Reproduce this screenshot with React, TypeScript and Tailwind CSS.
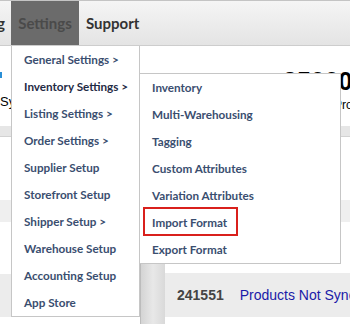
import React from 'react';

const mainItems = [
  { label: 'General Settings >' },
  { label: 'Inventory Settings >', active: true },
  { label: 'Listing Settings >' },
  { label: 'Order Settings >' },
  { label: 'Supplier Setup' },
  { label: 'Storefront Setup' },
  { label: 'Shipper Setup >' },
  { label: 'Warehouse Setup' },
  { label: 'Accounting Setup' },
  { label: 'App Store' },
];

const subItems = [
  'Inventory',
  'Multi-Warehousing',
  'Tagging',
  'Custom Attributes',
  'Variation Attributes',
  'Import Format',
  'Export Format',
];

export default function App() {
  return (
    <div className="relative w-[350px] h-[324px] overflow-hidden bg-white font-['Lato',sans-serif]">
      {/* Top nav */}
      <div className="flex h-[46px] border-t border-b border-t-[#c4c4c4] border-b-[#cdcdcd] bg-gradient-to-b from-[#f5f5f5] to-[#e4e4e4] text-[15px] font-bold">
        <div className="w-[11px] shrink-0 flex justify-end items-center overflow-hidden pr-[6px] text-[#333]">
          <span>Listing</span>
        </div>
        <div className="w-[68px] shrink-0 flex items-center justify-center bg-[#6b6b6b] text-[#4a4a4a]">
          Settings
        </div>
        <div className="flex items-center pl-[7px] text-[#333]">Support</div>
      </div>

      {/* Page content behind the menus */}
      <div className="flex h-[80px]">
        <div className="w-[283px] shrink-0 flex flex-col">
          <div className="mt-[26px] w-[2px] h-[6px] bg-[#2a8fd6]" />
          <div className="mt-[17px] text-[13px] leading-none text-black font-['Liberation_Sans',sans-serif]">
            Sync
          </div>
        </div>
        <div className="shrink-0 flex flex-col font-['Liberation_Sans',sans-serif] text-black">
          <div className="mt-[23px] text-[25px] leading-none font-bold">25000</div>
          <div className="mt-[5px] ml-[51px] text-[12px] leading-none whitespace-nowrap">Products</div>
        </div>
      </div>
      <div className="h-[11px] bg-[#e6e6e6] border-b border-[#d2d2d2]" />
      <div className="h-[63px]" />
      <div className="h-[22px] bg-[#efefef]" />
      <div className="flex h-[102px]">
        <div className="w-[140px] shrink-0 flex flex-col">
          <div className="h-[52px]" />
          <div className="h-[43px] bg-[#ececec]" />
        </div>
        <div className="w-[25px] shrink-0 border-l border-[#bcbcbc] bg-gradient-to-r from-[#d4d4d4] via-[#e8e8e8] to-[#d9d9d9]" />
        <div className="flex-1 min-w-0 overflow-hidden flex flex-col">
          <div className="h-[51px]" />
          <div className="h-[44px] bg-[#ececec] flex items-center pl-[12px] font-['Liberation_Sans',sans-serif] text-[14px] whitespace-nowrap">
            <span className="font-bold text-[#444]">241551</span>
            <span className="ml-[16px] text-[#1a1aa8]">Products Not Synced</span>
          </div>
        </div>
      </div>

      {/* Settings dropdown */}
      <div className="absolute left-[11px] top-[46px] w-[129px] bg-white border border-t-0 border-[#c6c6c6]">
        {mainItems.map((item) => (
          <div
            key={item.label}
            className={`h-[27px] flex items-center pl-[12px] text-[11.7px] font-bold whitespace-nowrap ${
              item.active ? 'text-[#1f2b45]' : 'text-[#3a4e6f]'
            }`}
          >
            {item.label}
          </div>
        ))}
      </div>

      {/* Inventory submenu */}
      <div className="absolute left-[139px] top-[73px] w-[202px] bg-white border border-[#c6c6c6]">
        {subItems.map((label) => (
          <div
            key={label}
            className="h-[27px] flex items-center pl-[12px] text-[11.7px] font-bold text-[#3a4e6f] whitespace-nowrap"
          >
            {label}
          </div>
        ))}
      </div>

      {/* Highlight box */}
      <div className="absolute left-[143px] top-[207px] w-[95px] h-[29px] border-2 border-[#d9201c]" />
    </div>
  );
}
